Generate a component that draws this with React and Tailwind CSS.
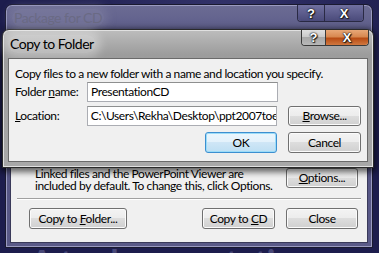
function Btn({ children, className = "", focus = false }) {
  return (
    <div
      className={
        "flex items-center justify-center rounded-[3px] border text-[12px] leading-none text-black " +
        (focus
          ? "border-[#3c8fd0] bg-[linear-gradient(#eaf6fd_0%,#e3f1fb_50%,#cfe6f6_50%,#bedff3_100%)] shadow-[inset_0_0_0_1px_#9cdcf8] "
          : "border-[#707070] bg-[linear-gradient(#f3f3f3_0%,#ececec_50%,#dddddd_50%,#d0d0d0_100%)] shadow-[inset_0_0_0_1px_#fbfbfb] ") +
        className
      }
    >
      {children}
    </div>
  );
}

function Glyph({ children, className = "" }) {
  return (
    <span
      className={
        "font-[Arial,sans-serif] text-[13px] font-black leading-none tracking-normal text-white [text-shadow:0_0_1px_#000,0_0_2px_#000,1px_1px_1px_#222] " +
        className
      }
    >
      {children}
    </span>
  );
}

export default function App() {
  return (
    <div className="relative h-[253px] w-[379px] overflow-hidden bg-[#1d1d4d] font-['Segoe_UI',Lato,sans-serif] tracking-[-0.4px]">
      {/* desktop texture */}
      <div className="absolute inset-0 bg-[radial-gradient(ellipse_at_60%_10%,#34346c_0%,#1d1d4d_60%)]" />
      <div className="absolute left-[30px] top-[245px] whitespace-nowrap text-[34px] font-bold leading-none text-[#9090c0]/40">
        A tool presentation
      </div>

      {/* Outer window: Package for CD */}
      <div className="absolute left-[5px] top-[4px] flex h-[244px] w-[368px] flex-col rounded-t-[7px] border border-[#1a1a30] bg-[linear-gradient(180deg,#6c6c94_0%,#4f4f80_20%,#5a5a88_100%)] shadow-[inset_0_0_0_1px_#9a9ac0]">
        <div className="flex h-[26px] shrink-0 items-start justify-between">
          <div className="ml-[6px] mt-[4px] rounded-full bg-[#8a8aa8]/40 px-[2px] text-[14px] leading-[18px] tracking-[-0.5px] text-[#6a6a84] shadow-[0_0_8px_4px_rgba(140,140,170,0.35)]">
            Package for CD
          </div>
          <div className="mr-[8px] flex h-[17px] overflow-hidden rounded-b-[4px] border border-t-0 border-[#2a2a44] shadow-[inset_0_0_0_1px_#8a8ab0]">
            <div className="flex w-[27px] items-center justify-center border-r border-[#2a2a44] bg-[linear-gradient(#7070a0,#4a4a7a)]">
              <Glyph>?</Glyph>
            </div>
            <div className="flex w-[38px] items-center justify-center bg-[linear-gradient(#7070a0,#4a4a7a)]">
              <Glyph>X</Glyph>
            </div>
          </div>
        </div>
        <div className="mx-[4px] mb-[4px] flex flex-1 flex-col justify-end border border-[#3a3a5a] bg-[#f0f0f0] text-[12px] text-black">
          <div className="flex h-[24px] items-start justify-between">
            <div className="whitespace-nowrap pl-[24px] leading-[12px]">
              <div>Linked files and the PowerPoint Viewer are</div>
              <div>included by default. To change this, click Options.</div>
            </div>
            <Btn className="mr-[9px] h-[20px] w-[72px]">
              <span>
                <u>O</u>ptions...
              </span>
            </Btn>
          </div>
          <div className="mx-[6px] mt-[6px] border-t border-b border-t-[#a0a0a0] border-b-white" />
          <div className="mb-[13px] mt-[8px] flex items-center pl-[18px] pr-[9px]">
            <Btn className="h-[21px] w-[98px]">
              <span>
                Copy to <u>F</u>older...
              </span>
            </Btn>
            <div className="flex-1" />
            <Btn className="h-[21px] w-[73px]">
              <span>
                Copy to <u>C</u>D
              </span>
            </Btn>
            <Btn className="ml-[11px] h-[21px] w-[72px]">Close</Btn>
          </div>
        </div>
      </div>

      {/* Inner dialog: Copy to Folder */}
      <div className="absolute left-[2px] top-[29px] flex h-[139px] w-[372px] flex-col rounded-t-[7px] border border-[#2a2a2a] bg-[linear-gradient(180deg,#bdbdbd_0%,#9c9c9c_18%,#a8a8a8_100%)] shadow-[0_2px_6px_2px_rgba(0,0,0,0.6),inset_0_0_0_1px_#e0e0e0]">
        <div className="flex h-[28px] shrink-0 items-start justify-between">
          <div className="ml-[5px] mt-[5px] rounded-full bg-white/30 px-[2px] text-[14px] leading-[18px] tracking-[-0.5px] text-black shadow-[0_0_8px_5px_rgba(255,255,255,0.3)]">
            Copy to Folder
          </div>
          <div className="mr-[4px] flex h-[16px] overflow-hidden rounded-b-[4px] border border-t-0 border-[#3a3a3a] shadow-[inset_0_0_0_1px_#e8e8e8]">
            <div className="flex w-[24px] items-center justify-center border-r border-[#3a3a3a] bg-[linear-gradient(#e0e0e0_0%,#c8c8c8_50%,#a8a8a8_50%,#b8b8b8_100%)]">
              <Glyph>?</Glyph>
            </div>
            <div className="flex w-[42px] items-center justify-center bg-[linear-gradient(#e8a878_0%,#d88850_45%,#b84c14_55%,#d07840_100%)]">
              <Glyph>X</Glyph>
            </div>
          </div>
        </div>
        <div className="mx-[5px] mb-[5px] flex flex-1 flex-col border border-[#6a6a6a] bg-[#f0f0f0] px-[6px] pt-[7px] text-[12px] text-black">
          <div className="whitespace-nowrap leading-[15px]">Copy files to a new folder with a name and location you specify.</div>
          <div className="mt-[1px] flex items-center">
            <div className="w-[72px]">
              Folder <u>n</u>ame:
            </div>
            <div className="flex h-[20px] w-[191px] items-center border border-[#abadb3] border-t-[#8e8f8f] bg-white pl-[3px]">
              PresentationCD
            </div>
          </div>
          <div className="mt-[4px] flex items-center">
            <div className="w-[72px]">
              <u>L</u>ocation:
            </div>
            <div className="flex h-[20px] w-[191px] items-center overflow-hidden whitespace-nowrap border border-[#abadb3] border-t-[#8e8f8f] bg-white pl-[3px]">
              C:\Users\Rekha\Desktop\ppt2007toexcel
            </div>
            <Btn className="ml-[11px] h-[20px] w-[73px]">
              <span>
                <u>B</u>rowse...
              </span>
            </Btn>
          </div>
          <div className="mt-[6px] flex justify-end">
            <Btn focus className="h-[21px] w-[72px]">
              OK
            </Btn>
            <Btn className="ml-[11px] h-[21px] w-[73px]">Cancel</Btn>
          </div>
        </div>
      </div>
    </div>
  );
}
